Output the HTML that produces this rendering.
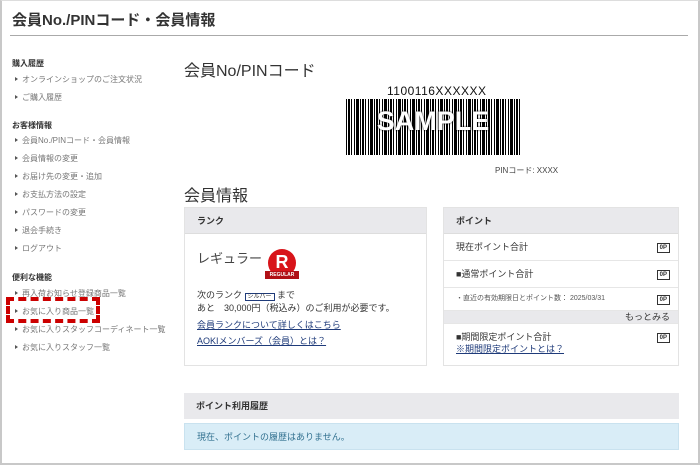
<!DOCTYPE html>
<html><head><meta charset="utf-8"><style>
*{margin:0;padding:0;box-sizing:border-box}
body{width:700px;height:465px;background:#fff;font-family:"Liberation Sans","Noto Sans CJK JP",sans-serif;color:#333;position:relative;overflow:hidden}
.frame{position:absolute;left:0;top:0;width:700px;height:465px;border:2px solid #c8c8c8;border-top:1px solid #ddd}
.a{position:absolute;white-space:nowrap}
h1{position:absolute;left:12px;top:9px;font-size:15px;font-weight:bold;color:#333}
.rule{position:absolute;left:10px;top:35px;width:678px;height:1px;background:#aaa}
.sh{font-size:8px;font-weight:bold;color:#333}
.si{font-size:8px;color:#777}
.si:before{content:"";display:inline-block;border-left:3px solid #555;border-top:2.5px solid transparent;border-bottom:2.5px solid transparent;margin-right:4px;vertical-align:1px}
.box{position:absolute;border:1px solid #e3e3e3;background:#fff}
.hd{background:#e9e9ec;font-size:9px;font-weight:bold;padding-left:12px;height:26px;line-height:26px;border-bottom:1px solid #ddd}
.row{position:absolute;left:0;right:0;border-bottom:1px solid #e6e6e6;font-size:9px;padding-left:12px}
.op{position:absolute;right:8px;border:1px solid #333;font-size:6px;padding:0 2px;line-height:8px;font-weight:bold}
a{color:#1f3b7a;text-decoration:underline}
</style></head><body>
<div class="frame"></div>
<h1>会員No./PINコード・会員情報</h1>
<div class="rule"></div>

<div class="a sh" style="left:12px;top:58px">購入履歴</div>
<div class="a si" style="left:15px;top:74px">オンラインショップのご注文状況</div>
<div class="a si" style="left:15px;top:92px">ご購入履歴</div>
<div class="a sh" style="left:12px;top:120px">お客様情報</div>
<div class="a si" style="left:15px;top:135px">会員No./PINコード・会員情報</div>
<div class="a si" style="left:15px;top:153px">会員情報の変更</div>
<div class="a si" style="left:15px;top:171px">お届け先の変更・追加</div>
<div class="a si" style="left:15px;top:189px">お支払方法の設定</div>
<div class="a si" style="left:15px;top:207px">パスワードの変更</div>
<div class="a si" style="left:15px;top:225px">退会手続き</div>
<div class="a si" style="left:15px;top:243px">ログアウト</div>
<div class="a sh" style="left:12px;top:272px">便利な機能</div>
<div class="a si" style="left:15px;top:288px">再入荷お知らせ登録商品一覧</div>
<div class="a si" style="left:15px;top:306px">お気に入り商品一覧</div>
<div class="a si" style="left:15px;top:324px">お気に入りスタッフコーディネート一覧</div>
<div class="a si" style="left:15px;top:342px">お気に入りスタッフ一覧</div>
<div class="a" style="left:6px;top:297px;width:94px;height:26px;border:4px dashed #c00"></div>

<div class="a" style="left:184px;top:57px;font-size:16px;color:#333">会員No/PINコード</div>
<div class="a" style="left:387px;top:84px;font-size:12px;color:#111;letter-spacing:0.5px">1100116XXXXXX</div>
<div class="a" style="left:346px;top:99px;width:174px;height:56px;background:repeating-linear-gradient(90deg,#000 0 1px,#fff 1px 2px,#000 2px 4px,#fff 4px 5px,#000 5px 6px,#fff 6px 8px,#000 8px 9px,#fff 9px 10px,#000 10px 13px,#fff 13px 14px)"></div>
<div class="a" style="left:346px;top:106px;width:174px;text-align:center;font-size:27px;font-weight:bold;color:#fff;text-shadow:0 0 2px #000">SAMPLE</div>
<div class="a" style="left:495px;top:165px;font-size:8px;color:#444">PINコード: XXXX</div>
<div class="a" style="left:184px;top:182px;font-size:16px;color:#333">会員情報</div>

<div class="box" style="left:184px;top:207px;width:243px;height:159px">
<div class="hd">ランク</div>
<div class="a" style="left:12px;top:40px;font-size:13px;color:#444">レギュラー</div>
<div class="a" style="left:83px;top:41px;width:28px;height:28px;border-radius:50%;background:#d8141a;color:#fff;font-weight:bold;font-size:18px;text-align:center;line-height:26px">R</div>
<div class="a" style="left:80px;top:63px;width:34px;height:8px;background:#b01016;color:#fff;font-size:5px;text-align:center;line-height:8px;font-weight:bold">REGULAR</div>
<div class="a" style="left:12px;top:80px;font-size:9px;color:#333">次のランク <span style="border:1px solid #1f3b7a;font-size:6px;padding:0 2px">シルバー</span> まで</div>
<div class="a" style="left:12px;top:93px;font-size:9px;color:#333">あと　30,000円（税込み）のご利用が必要です。</div>
<div class="a" style="left:12px;top:110px;font-size:9px"><a>会員ランクについて詳しくはこちら</a></div>
<div class="a" style="left:12px;top:126px;font-size:9px"><a>AOKIメンバーズ（会員）とは？</a></div>
</div>

<div class="box" style="left:443px;top:207px;width:236px;height:159px">
<div class="hd">ポイント</div>
<div class="row" style="top:26px;height:27px;line-height:26px">現在ポイント合計<span class="op" style="top:9px">0P</span></div>
<div class="row" style="top:53px;height:27px;line-height:26px">■通常ポイント合計<span class="op" style="top:9px">0P</span></div>
<div class="row" style="top:80px;height:23px;line-height:22px;font-size:7px;color:#555">・直近の有効期限日とポイント数： 2025/03/31<span class="op" style="top:7px;color:#333">0P</span></div>
<div class="row" style="top:103px;height:13px;line-height:13px;background:#e9e9ec;text-align:right;padding-right:8px;font-size:9px">もっとみる</div>
<div class="row" style="top:116px;height:42px;border:none;padding-top:7px;line-height:12px">■期間限定ポイント合計<span class="op" style="top:9px">0P</span><br><a style="font-size:9px">※期間限定ポイントとは？</a></div>
</div>

<div class="box" style="left:184px;top:393px;width:495px;height:26px;border:none"><div class="hd" style="border:none">ポイント利用履歴</div></div>
<div class="a" style="left:184px;top:423px;width:495px;height:27px;background:#d9edf7;border:1px solid #c9e2ef;font-size:9px;color:#31708f;line-height:26px;padding-left:12px">現在、ポイントの履歴はありません。</div>
</body></html>
